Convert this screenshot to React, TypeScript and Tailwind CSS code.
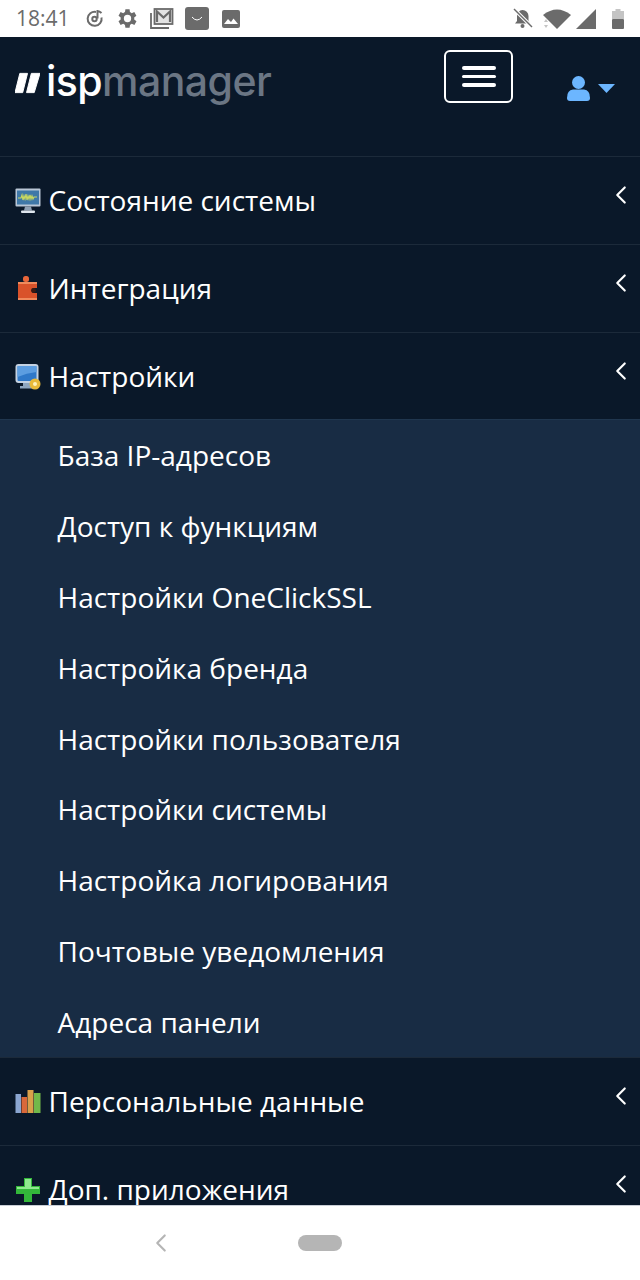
import { ChevronLeft } from "lucide-react";
import type { ReactNode } from "react";

const subItems = [
  "База IP-адресов",
  "Доступ к функциям",
  "Настройки OneClickSSL",
  "Настройка бренда",
  "Настройки пользователя",
  "Настройки системы",
  "Настройка логирования",
  "Почтовые уведомления",
  "Адреса панели",
];

function MonitorIcon() {
  return (
    <svg width="26" height="26" viewBox="0 0 26 26">
      <rect x="0.500" y="0.500" width="25" height="18" rx="1" fill="#b9c6d6" />
      <rect x="2" y="2.500" width="22" height="14" fill="#3f78a8" />
      <path d="M3 10h3l1-3 1 5 1-4 1 3 1-5 1 6 1-4 1 3 1-4 1 4 1-3 1 3 1-2h3" fill="none" stroke="#c8d860" strokeWidth="1.200" />
      <path d="M10 18.500h6l1 4h-8z" fill="#8ea0b4" />
      <rect x="6" y="22.500" width="14" height="2.500" rx="1" fill="#dfe6ee" />
    </svg>
  );
}

function PuzzleIcon() {
  return (
    <svg width="26" height="26" viewBox="0 0 26 26">
      <rect x="8" y="0" width="6" height="6" rx="2.500" fill="#e8663a" />
      <path d="M3 6h19v6h-3a2.500 2.500 0 0 0 0 5h3v7H3z" fill="#d9522a" />
      <rect x="3" y="6" width="19" height="2" fill="#f08a5c" />
      <rect x="3" y="22" width="19" height="2" fill="#f08a5c" />
      <circle cx="18.500" cy="14.500" r="2.400" fill="#3a1a12" />
    </svg>
  );
}

function SettingsMonitorIcon() {
  return (
    <svg width="26" height="26" viewBox="0 0 26 26">
      <rect x="0.500" y="0" width="23" height="19" rx="3" fill="#c4d2e2" />
      <rect x="2.500" y="2" width="19" height="15" rx="1" fill="#2f78c8" />
      <path d="M2.500 2h19v6q-10 1-19 5z" fill="#5c9de0" />
      <path d="M8 19h7v3h3v2.500H5V22h3z" fill="#8ea6c0" />
      <circle cx="20" cy="20" r="5.500" fill="#e8b93a" />
      <circle cx="20" cy="20" r="2" fill="#fff1b8" />
    </svg>
  );
}

function BarsIcon() {
  return (
    <svg width="26" height="26" viewBox="0 0 26 26">
      <rect x="0.500" y="5" width="5.500" height="19" fill="#8aa5d0" />
      <rect x="6.500" y="8" width="5.500" height="16" fill="#d9683a" />
      <rect x="12.500" y="1" width="6" height="23" fill="#d9a04a" />
      <rect x="19" y="4" width="6.500" height="20" fill="#72b84a" />
    </svg>
  );
}

function PlusIcon() {
  return (
    <svg width="26" height="26" viewBox="0 0 26 26">
      <path d="M9 1h8v8h8v8h-8v8H9v-8H1V9h8z" fill="#33b83a" />
      <path d="M10 2h6v8h8v2H2v-2h8z" fill="#8ee88e" />
    </svg>
  );
}

function MenuRow({ icon, label, height }: { icon: ReactNode; label: string; height: string }) {
  return (
    <div className={`relative flex shrink-0 items-start border-t border-[#1c2a3a] pl-[15px] pt-[26px] ${height}`}>
      <span className="flex h-[36px] w-[33.500px] shrink-0 items-center">{icon}</span>
      <span className="-mt-[1px] text-[28px] leading-[36px] text-white">{label}</span>
      <ChevronLeft className="absolute right-[4px] top-[23px] text-white" size={30} strokeWidth={1.700} />
    </div>
  );
}

function StatusBar() {
  return (
    <div className="flex h-[37px] shrink-0 items-center bg-white pl-[16px] pr-[16px] text-[#6b6b6b]">
      <span className="w-[69px] text-[21px] leading-none">18:41</span>
      <div className="flex items-center gap-[11px]">
        <svg width="20" height="21" viewBox="0 0 20 20" fill="none" stroke="#6b6b6b" strokeWidth="2">
          <path d="M11 3.500A7 7 0 1 0 16.500 9" />
          <circle cx="9.500" cy="10.500" r="2.200" />
          <path d="M12.500 10V2.500q2 .2 4 2" />
        </svg>
        <svg width="23" height="23" viewBox="2 1 22 22" fill="#6b6b6b">
          <path d="M19.400 13a7.5 7.5 0 0 0 0-2l2.100-1.600-2-3.500-2.500 1a7.500 7.500 0 0 0-1.700-1L15 3.200h-4l-.4 2.700a7.500 7.500 0 0 0-1.700 1l-2.500-1-2 3.500L6.500 11a7.500 7.500 0 0 0 0 2l-2.100 1.600 2 3.500 2.500-1a7.500 7.500 0 0 0 1.700 1l.4 2.700h4l.4-2.700a7.500 7.500 0 0 0 1.700-1l2.500 1 2-3.500zM13 15.500a3.500 3.500 0 1 1 0-7 3.500 3.500 0 0 1 0 7z" />
        </svg>
        <svg width="24" height="21" viewBox="0 0 24 21" fill="none" stroke="#6b6b6b" strokeWidth="1.800">
          <path d="M1 5v15h18" />
          <rect x="4.500" y="1" width="18" height="15" fill="#e4e4e4" />
          <path d="M7 14V3.500l6.500 6 6.500-6V14" strokeWidth="2.200" />
        </svg>
        <span className="flex h-[23px] w-[24px] items-center justify-center rounded-[3px] bg-[#6b6b6b]">
          <svg width="12" height="6" viewBox="0 0 12 6" fill="none" stroke="#fff" strokeWidth="1">
            <path d="M1 1q5 6 10 0" />
          </svg>
        </span>
        <svg className="ml-[2px]" width="18" height="18" viewBox="0 0 18 18">
          <rect width="18" height="18" rx="2" fill="#6b6b6b" />
          <path d="M2 14l4-5 3 3 2.500-3.500L16 14z" fill="#fff" />
        </svg>
      </div>
      <div className="ml-auto flex items-center gap-[5px]">
        <svg className="mr-[5px]" width="21" height="21" viewBox="0 0 21 21" fill="#6b6b6b">
          <path d="M10.500 2a6 6 0 0 1 6 6v5l2 2.500H3L5 13V8a6 6 0 0 1 5.500-6z" />
          <circle cx="10.500" cy="18" r="2" />
          <path d="M2 1l18 18" stroke="#fff" strokeWidth="3.500" />
          <path d="M2 1l18 18" stroke="#6b6b6b" strokeWidth="1.500" />
        </svg>
        <svg width="28" height="20" viewBox="0 0 28 20" fill="#6b6b6b">
          <path d="M0 6Q14-5 28 6L14 20z" />
          <path d="M1 13l2-3 2 3zM1 16l2 3 2-3z" fill="#c4c4c4" />
        </svg>
        <svg width="20" height="20" viewBox="0 0 20 20" fill="#6b6b6b">
          <path d="M20 0v20H0z" />
        </svg>
        <svg className="ml-[11px]" width="12" height="20" viewBox="0 0 12 20">
          <rect x="3.500" y="0" width="5" height="2" fill="#c4c4c4" />
          <rect y="2" width="12" height="8" fill="#c4c4c4" />
          <rect y="10" width="12" height="10" rx="1" fill="#6b6b6b" />
        </svg>
      </div>
    </div>
  );
}

function Header() {
  return (
    <div className="flex h-[119px] shrink-0 items-start bg-[#0a1829]">
      <div className="ml-[15px] mt-[22px] flex items-center">
        <svg width="25" height="22" viewBox="0 0 26 22" fill="#fff" className="mr-[6px] mt-[4px]">
          <path d="M5 1h8L8 21H0zM17 1h9l-6 20h-8z" stroke="#fff" strokeWidth="1" strokeLinejoin="round" />
        </svg>
        <span className="font-['Inter',sans-serif] text-[41px] leading-[44px] font-medium tracking-[-0.550px] text-white">
          isp<span className="font-medium text-[#6b7684]">manager</span>
        </span>
      </div>
      <div className="ml-auto mr-[127px] mt-[13px] flex h-[53px] w-[69px] flex-col items-center justify-center gap-[5px] rounded-[6px] border-2 border-white">
        <span className="h-[4px] w-[34px] rounded-full bg-white" />
        <span className="h-[3px] w-[34px] rounded-full bg-white" />
        <span className="h-[4px] w-[34px] rounded-full bg-white" />
      </div>
    </div>
  );
}

export default function App() {
  return (
    <div className="flex h-[1280px] w-[640px] flex-col overflow-hidden bg-white font-['Open_Sans','Noto_Sans',sans-serif]">
      <StatusBar />
      <div className="relative">
        <Header />
        <div className="absolute right-[25px] top-[39px] flex items-center gap-[8px]">
          <svg width="23" height="25" viewBox="0 0 23 25" fill="#6cb6ff">
            <circle cx="11.500" cy="6.500" r="6.500" />
            <path d="M0 22q0-8 6-8.500h11q6 .5 6 8.500 0 3-3 3H3q-3 0-3-3z" />
          </svg>
          <svg width="17" height="9" viewBox="0 0 17 9" fill="#6cb6ff">
            <path d="M0 0h17L8.500 9z" />
          </svg>
        </div>
      </div>
      <div className="flex min-h-0 flex-1 flex-col overflow-hidden bg-[#0a1829]">
        <MenuRow icon={<MonitorIcon />} label="Состояние системы" height="h-[88px]" />
        <MenuRow icon={<PuzzleIcon />} label="Интеграция" height="h-[88px]" />
        <MenuRow icon={<SettingsMonitorIcon />} label="Настройки" height="h-[87px]" />
        <div className="flex h-[638px] shrink-0 flex-col border-t border-[#20364e] bg-[#182c44] pl-[57.500px]">
          {subItems.map((item) => (
            <div key={item} className="flex h-[70.800px] shrink-0 items-center text-[28px] leading-[36px] text-white">
              {item}
            </div>
          ))}
        </div>
        <MenuRow icon={<BarsIcon />} label="Персональные данные" height="h-[88px]" />
        <MenuRow icon={<PlusIcon />} label="Доп. приложения" height="h-[88px]" />
      </div>
      <div className="flex h-[75px] shrink-0 items-center border-t border-[#c9ced6] bg-white pb-[1px]">
        <ChevronLeft className="ml-[146px] text-[#b5b5b5]" size={30} strokeWidth={1.700} />
        <span className="ml-[122px] h-[16px] w-[44px] rounded-full bg-[#b5b5b5]" />
      </div>
    </div>
  );
}
